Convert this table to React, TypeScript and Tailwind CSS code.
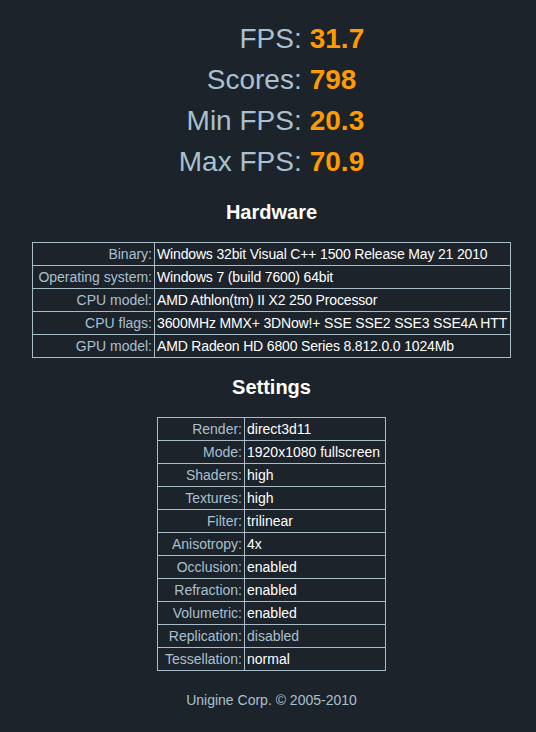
import React from "react";

const hardware: [string, string, boolean][] = [
  ["Binary:", "Windows 32bit Visual C++ 1500 Release May 21 2010", true],
  ["Operating system:", "Windows 7 (build 7600) 64bit", true],
  ["CPU model:", "AMD Athlon(tm) II X2 250 Processor", true],
  ["CPU flags:", "3600MHz MMX+ 3DNow!+ SSE SSE2 SSE3 SSE4A HTT", true],
  ["GPU model:", "AMD Radeon HD 6800 Series 8.812.0.0 1024Mb", true],
];

const settings: [string, string, boolean][] = [
  ["Render:", "direct3d11", true],
  ["Mode:", "1920x1080 fullscreen", true],
  ["Shaders:", "high", true],
  ["Textures:", "high", true],
  ["Filter:", "trilinear", true],
  ["Anisotropy:", "4x", true],
  ["Occlusion:", "enabled", true],
  ["Refraction:", "enabled", true],
  ["Volumetric:", "enabled", true],
  ["Replication:", "disabled", false],
  ["Tessellation:", "normal", true],
];

const scores: [string, string][] = [
  ["FPS:", "31.7"],
  ["Scores:", "798"],
  ["Min FPS:", "20.3"],
  ["Max FPS:", "70.9"],
];

function InfoTable({
  rows,
  tableClass,
  labelClass,
  valueClass,
}: {
  rows: [string, string, boolean][];
  tableClass: string;
  labelClass: string;
  valueClass: string;
}) {
  return (
    <table className={"mx-auto table-fixed border-collapse text-[14px] leading-[16px] " + tableClass}>
      <tbody>
        {rows.map(([k, v, on]) => (
          <tr key={k}>
            <td
              className={
                "border border-[#a9bdc9] px-[2px] py-[3px] text-right text-[#a9c0d1] whitespace-nowrap " + labelClass
              }
            >
              {k}
            </td>
            <td
              className={
                "border border-[#a9bdc9] px-[2px] py-[3px] text-left whitespace-nowrap " +
                valueClass +
                " " +
                (on ? "text-white" : "text-[#a9c0d1]")
              }
            >
              {v}
            </td>
          </tr>
        ))}
      </tbody>
    </table>
  );
}

export default function App() {
  return (
    <div
      className="min-h-[732px] w-[536px] bg-[#1c232a] pl-[7px] pt-[18px]"
      style={{ fontFamily: '"Liberation Sans", Arial, sans-serif' }}
    >
      <table className="mx-auto border-collapse text-[28px] leading-[41px]">
        <tbody>
          {scores.map(([k, v]) => (
            <tr key={k}>
              <td className="p-0 pr-[8px] text-right text-[#a9c0d1] whitespace-nowrap">{k}</td>
              <td className="p-0 text-left font-bold text-[#ff9a00] whitespace-nowrap">{v}</td>
            </tr>
          ))}
        </tbody>
      </table>

      <div className="mt-[19px] text-center text-[20px] font-bold leading-[23px] text-white">Hardware</div>
      <div className="mt-[18px]">
        <InfoTable
          rows={hardware}
          tableClass="w-[479px]"
          labelClass="w-[122px]"
          valueClass="tracking-[-0.16px]"
        />
      </div>

      <div className="mt-[18px] text-center text-[20px] font-bold leading-[23px] text-white">Settings</div>
      <div className="mt-[18px]">
        <InfoTable rows={settings} tableClass="w-[229px]" labelClass="w-[87px]" valueClass="" />
      </div>

      <div className="mt-[21px] text-center text-[14px] leading-[16px] text-[#a9c0d1]">
        Unigine Corp. © 2005-2010
      </div>
    </div>
  );
}
